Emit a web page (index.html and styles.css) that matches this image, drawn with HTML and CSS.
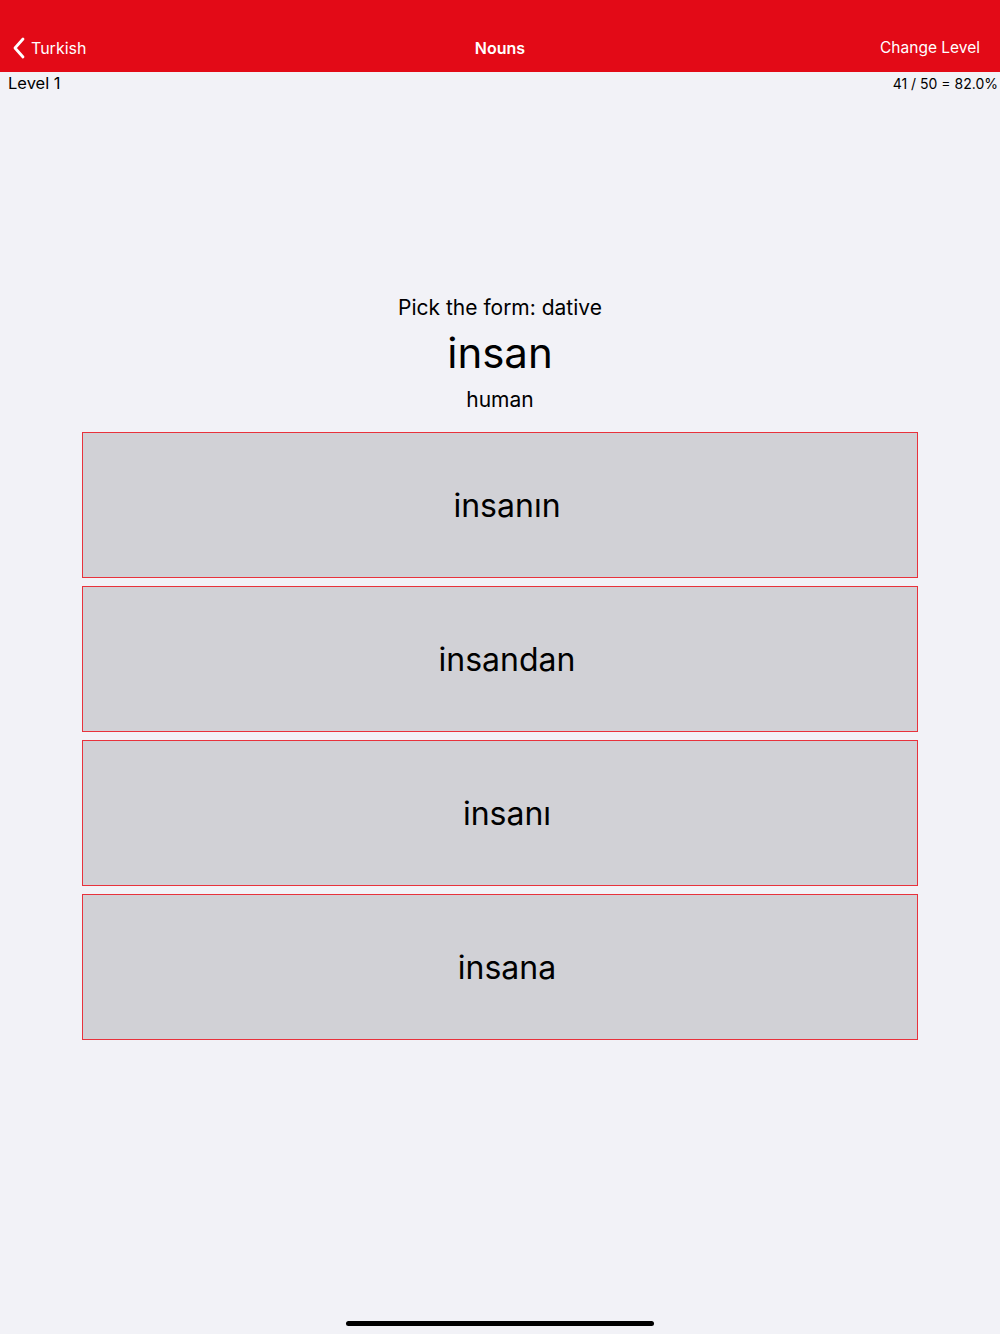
FILE: index.html
```html
<!DOCTYPE html>
<html>
<head>
<meta charset="utf-8">
<title>Nouns</title>
<link rel="stylesheet" href="styles.css">
</head>
<body>

<div class="navbar">
	<div class="nav-left">
		<svg class="chev" width="14" height="22" viewBox="0 0 14 22"><path d="M11 2 L3 11 L11 20" fill="none" stroke="#fff" stroke-width="2.8" stroke-linecap="round" stroke-linejoin="round"/></svg>
		<span>Turkish</span>
	</div>
	<div class="nav-title">Nouns</div>
	<div class="nav-right">Change Level</div>
</div>

<div class="status">
	<div class="level">Level 1</div>
	<div class="score">41 / 50 = 82.0%</div>
</div>

<div class="quiz">
	<div class="prompt">Pick the form: dative</div>
	<div class="word">insan</div>
	<div class="meaning">human</div>
	<div class="answers">
		<div class="answer">insanın</div>
		<div class="answer">insandan</div>
		<div class="answer">insanı</div>
		<div class="answer">insana</div>
	</div>
</div>

<div class="home-bar"></div>

</body>
</html>
```

FILE: styles.css
```css
body {
	margin: 0;
	background: #f2f2f7;
	font-family: Inter, "Noto Sans", sans-serif;
	color: #000;
	height: 1334px;
	position: relative;
	overflow: hidden;
}
.navbar {
	height: 72px;
	background: #e30a17;
	color: #fff;
	display: flex;
	align-items: flex-end;
	justify-content: space-between;
	padding: 0 20px 13px 12px;
	box-sizing: border-box;
	font-size: 16px;
	position: relative;
}
.nav-left {
	display: flex;
	align-items: center;
	gap: 5px;
	line-height: 22px;
}
.chev {
	display: block;
}
.nav-title {
	position: absolute;
	left: 0;
	right: 0;
	bottom: 13px;
	text-align: center;
	font-weight: 600;
	line-height: 22px;
}
.nav-right {
	line-height: 22px;
	font-size: 15.5px;
}
.status {
	display: flex;
	justify-content: space-between;
	padding: 0 2px 0 8px;
	height: 22px;
	align-items: center;
}
.level {
	font-size: 16.5px;
}
.score {
	font-size: 14px;
}
.quiz {
	margin-top: 200px;
	text-align: center;
}
.prompt {
	font-size: 21px;
	line-height: 28px;
}
.word {
	font-size: 42px;
	line-height: 54px;
	margin-top: 4px;
}
.meaning {
	font-size: 21px;
	line-height: 28px;
	margin-top: 6px;
}
.answers {
	margin: 18px 82px 0;
	display: flex;
	flex-direction: column;
	gap: 8px;
}
.answer {
	height: 146px;
	box-sizing: border-box;
	border: 1px solid #e8323c;
	background: #d1d1d6;
	display: flex;
	align-items: center;
	justify-content: center;
	padding-left: 14px;
	font-size: 32px;
}
.home-bar {
	position: absolute;
	left: 346px;
	width: 308px;
	top: 1321px;
	height: 5px;
	border-radius: 3px;
	background: #000;
}
```
